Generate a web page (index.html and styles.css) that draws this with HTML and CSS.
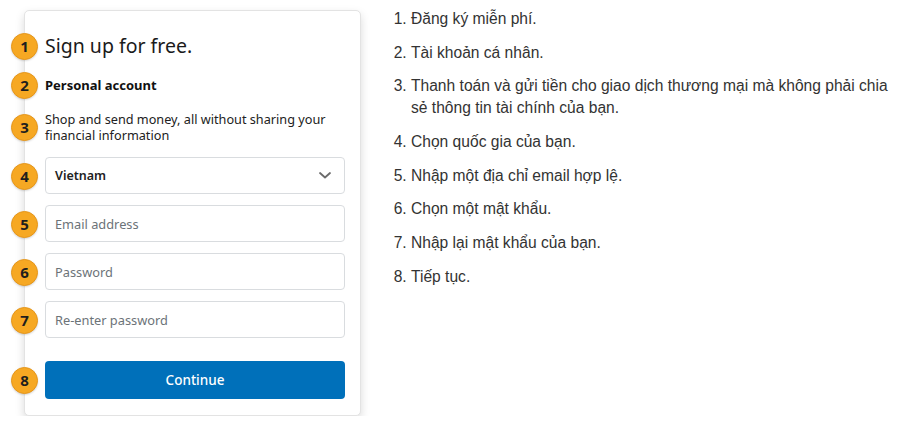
FILE: index.html
```html
<!DOCTYPE html>
<html lang="vi">
<head>
    <meta charset="UTF-8">
    <title>Sign up for free</title>
    <link rel="stylesheet" href="styles.css">
</head>
<body>
    <div class="page">
        <div class="card">
            <div class="row title-row">
                <span class="badge">1</span>
                <h1>Sign up for free.</h1>
            </div>
            <div class="row account-row">
                <span class="badge">2</span>
                <h2>Personal account</h2>
            </div>
            <div class="row desc-row">
                <span class="badge">3</span>
                <p>Shop and send money, all without sharing your financial information</p>
            </div>

            <div class="row field-row">
                <span class="badge">4</span>
                <div class="field select">
                    <span>Vietnam</span>
                    <svg class="chevron" width="14" height="9" viewBox="0 0 14 9">
                        <path d="M2 2 L7 6.5 L12 2" fill="none" stroke="#6b6b6b" stroke-width="1.8" stroke-linecap="round" stroke-linejoin="round"/>
                    </svg>
                </div>
            </div>
            <div class="row field-row">
                <span class="badge">5</span>
                <div class="field"><span class="placeholder">Email address</span></div>
            </div>
            <div class="row field-row">
                <span class="badge">6</span>
                <div class="field"><span class="placeholder">Password</span></div>
            </div>
            <div class="row field-row">
                <span class="badge">7</span>
                <div class="field"><span class="placeholder">Re-enter password</span></div>
            </div>

            <div class="row button-row">
                <span class="badge">8</span>
                <button class="continue">Continue</button>
            </div>
        </div>

        <ol class="steps">
            <li>Đăng ký miễn phí.</li>
            <li>Tài khoản cá nhân.</li>
            <li>Thanh toán và gửi tiền cho giao dịch thương mại mà không phải chia sẻ thông tin tài chính của bạn.</li>
            <li>Chọn quốc gia của bạn.</li>
            <li>Nhập một địa chỉ email hợp lệ.</li>
            <li>Chọn một mật khẩu.</li>
            <li>Nhập lại mật khẩu của bạn.</li>
            <li>Tiếp tục.</li>
        </ol>
    </div>
</body>
</html>
```

FILE: styles.css
```css
body {
    margin: 0;
    background: #ffffff;
    font-family: 'Noto Sans', 'DejaVu Sans', sans-serif;
}

.page {
    display: flex;
    align-items: flex-start;
}

/* Sign up card */
.card {
    width: 300px;
    margin: 10px 0 0 24px;
    padding: 23px 15px 16px 20px;
    background: #fff;
    border: 1px solid #e3e3e3;
    border-radius: 5px;
    box-shadow: 0 4px 10px rgba(0,0,0,0.15);
}

.row {
    position: relative;
}

.badge {
    position: absolute;
    left: -34px;
    top: 50%;
    width: 25px;
    height: 25px;
    margin-top: -13px;
    border-radius: 50%;
    background: #f6a823;
    border: 1px solid #e6961a;
    color: #1e1e1e;
    font-weight: bold;
    font-size: 15px;
    line-height: 25px;
    text-align: center;
    box-shadow: 0 1px 2px rgba(0,0,0,0.15);
}

h1 {
    margin: 0;
    font-size: 19.5px;
    font-weight: normal;
    line-height: 24px;
    color: #1a1a1a;
}

.account-row {
    margin-top: 18px;
}

h2 {
    margin: 0;
    font-size: 13px;
    font-weight: bold;
    line-height: 18px;
    color: #111;
}

.desc-row {
    margin-top: 17px;
}

.desc-row p {
    margin: 0;
    font-size: 12.7px;
    line-height: 16px;
    color: #222;
}

.field-row {
    margin-top: 11px;
}

.desc-row + .field-row {
    margin-top: 14px;
}

.field {
    height: 35px;
    display: flex;
    align-items: center;
    justify-content: space-between;
    padding: 0 12px 0 9px;
    border: 1px solid #d9dcdf;
    border-radius: 4px;
    font-size: 12.8px;
}

.select span {
    color: #222;
    font-weight: 600;
    font-size: 12.5px;
}

.placeholder {
    color: #6c7378;
}

.button-row {
    margin-top: 23px;
}

.continue {
    width: 100%;
    height: 38px;
    border: none;
    border-radius: 4px;
    background: #0070ba;
    color: #fff;
    font-family: 'Noto Sans', 'DejaVu Sans', sans-serif;
    font-size: 13.5px;
    font-weight: 500;
}

/* Explanation list */
.steps {
    width: 482px;
    margin: 8px 0 0 0;
    padding-left: 50px;
    font-family: 'Liberation Sans', Arial, sans-serif;
    font-size: 15.6px;
    line-height: 22px;
    color: #333;
}

.steps li {
    margin-bottom: 11.7px;
}
```
